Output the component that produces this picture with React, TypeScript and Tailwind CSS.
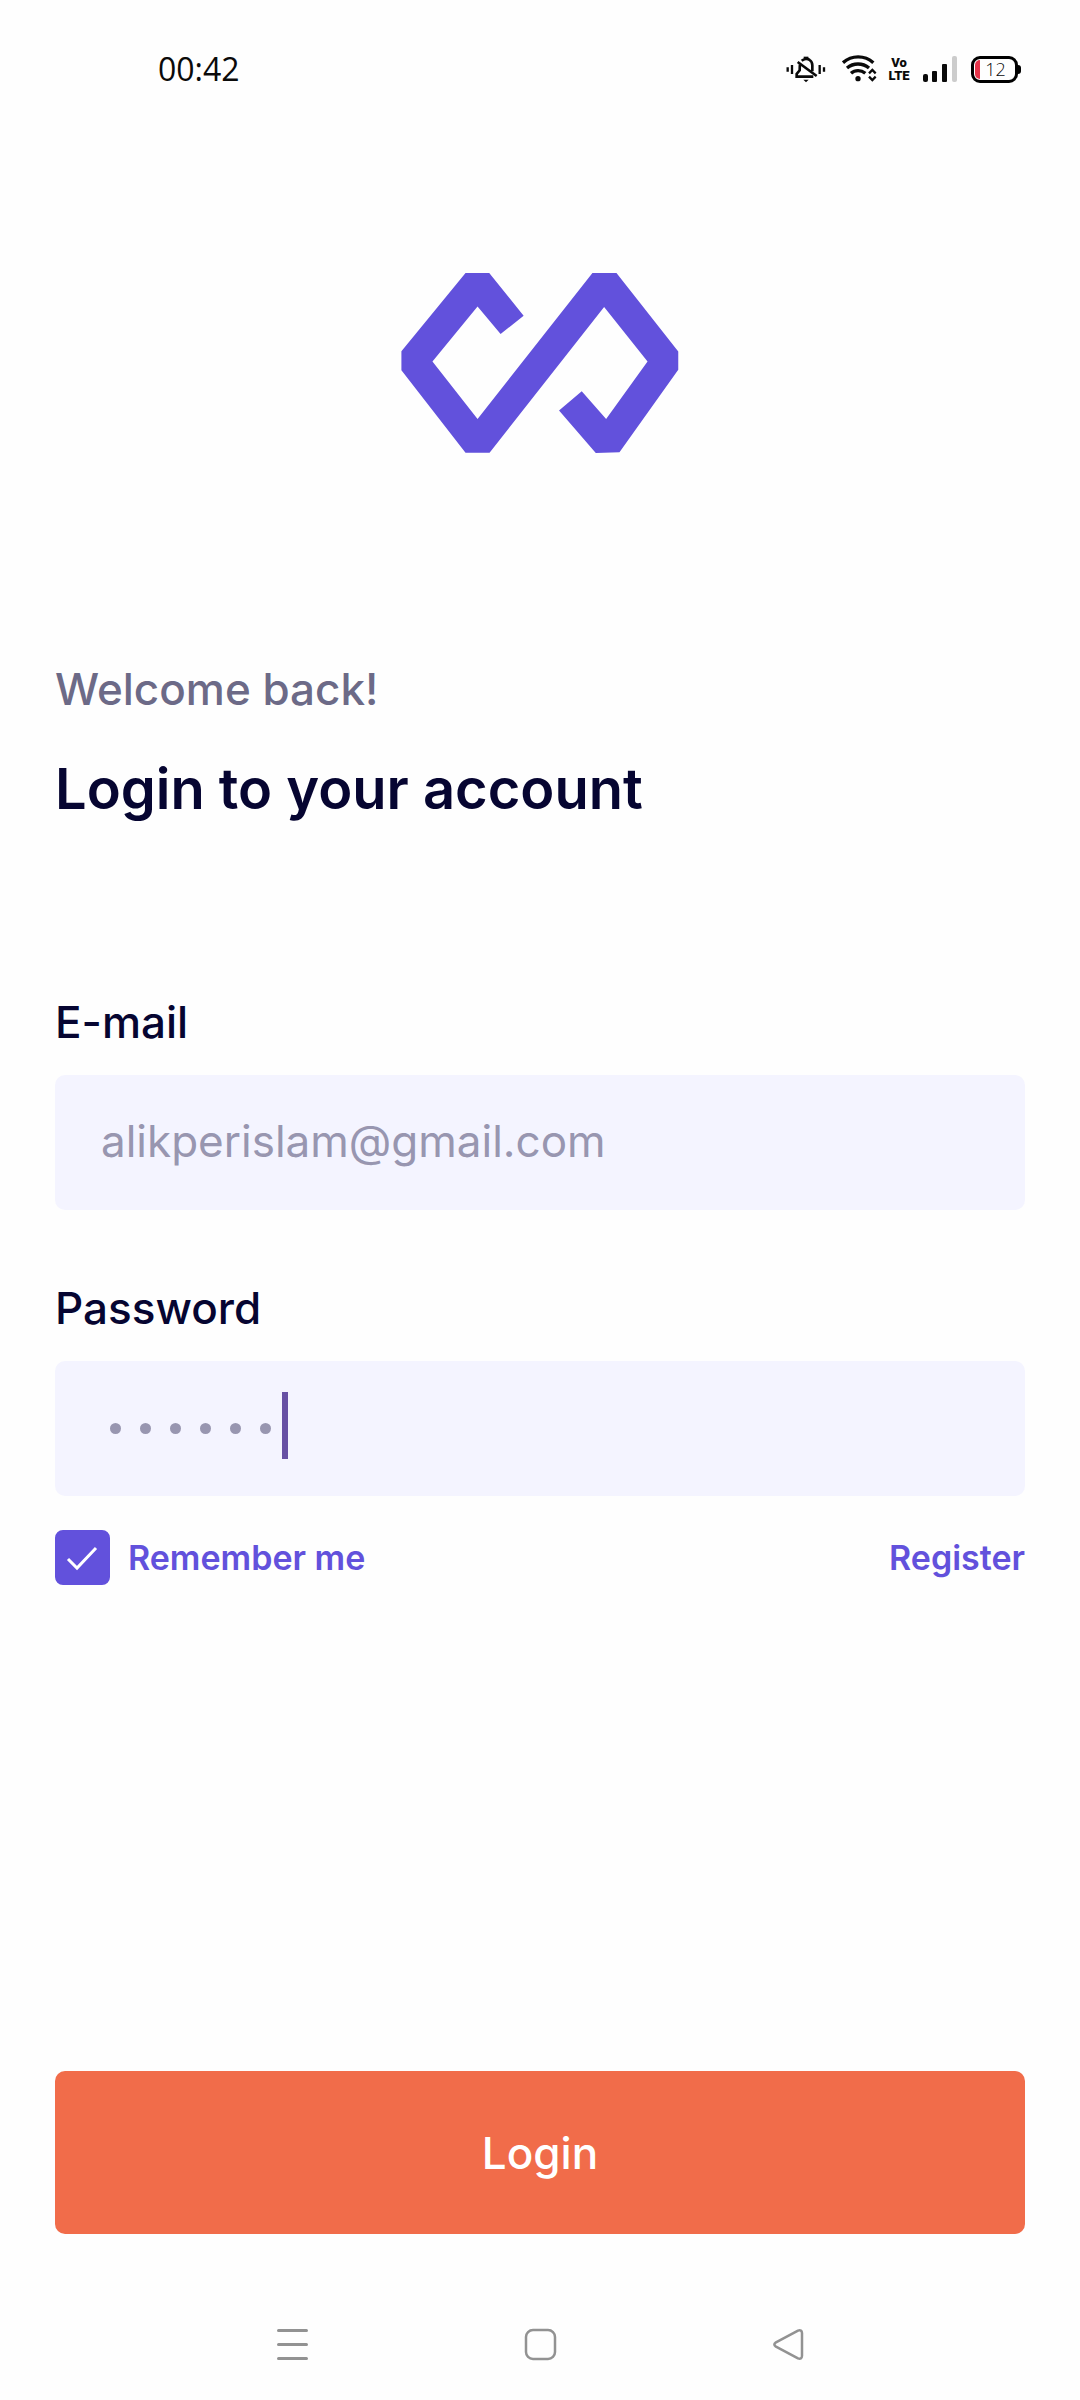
import { useState } from "react";

function BellOffIcon() {
  return (
    <svg width="40" height="28" viewBox="48 45 120 84" fill="none" stroke="#0a0a0a" strokeWidth="8" aria-hidden="true">
      <path d="M53 82V95M66 75V102M149 75V102M162 82V95" strokeWidth="7" />
      <path d="M95 62C102 56 113 55 119 60C125 64 127 70 127 76V94" />
      <path d="M90 74C89 78 89 82 89 91L80 102V110H130" />
      <path d="M83 66L140 108" />
      <path d="M101 53H115" strokeWidth="6" />
      <path d="M100 119H116L108 127Z" fill="#0a0a0a" stroke="none" />
    </svg>
  );
}

function WifiIcon() {
  return (
    <svg width="35" height="28" viewBox="216 45 105 84" fill="none" stroke="#0a0a0a" strokeWidth="10" aria-hidden="true">
      <path d="M219 68C245 45 284 45 310 68" />
      <path d="M231 84C250 68 278 68 297 84" />
      <path d="M243 100C255 89 273 89 286 100" />
      <circle cx="264" cy="116" r="8" fill="#0a0a0a" stroke="none" />
      <path d="M297 100L307 90L317 100M297 110L307 120L317 110" strokeWidth="7" />
    </svg>
  );
}

function SignalIcon() {
  return (
    <svg width="34" height="28" viewBox="0 0 34 28" aria-hidden="true">
      <rect x="0" y="19" width="5" height="8" rx="2" fill="#0a0a0a" />
      <rect x="9" y="16" width="5" height="11" rx="1" fill="#0a0a0a" />
      <rect x="19" y="9" width="5" height="18" rx="1" fill="#0a0a0a" />
      <rect x="29" y="1" width="5" height="26" rx="2" fill="#cccccc" />
    </svg>
  );
}

function Battery() {
  return (
    <div className="flex items-center" aria-label="Battery 12 percent">
      <div className="flex h-[27px] w-[47px] items-center rounded-[9px] border-[3px] border-black pr-1 pl-px">
        <span className="h-[19px] w-[5px] rounded-l-full rounded-r-xs bg-[#e5344a]" />
        <span className="flex-1 text-center text-[18px] leading-none font-light">12</span>
      </div>
      <span className="h-[9px] w-[3px] rounded-r-sm bg-black" />
    </div>
  );
}

function StatusBar() {
  return (
    <header className="flex h-[138px] items-center justify-between pr-[59px] pl-[158px] font-['Open_Sans','Noto_Sans',sans-serif] text-[#0a0a0a]">
      <time className="text-[32px] leading-10">00:42</time>
      <div className="flex items-center">
        <BellOffIcon />
        <span className="ml-4"><WifiIcon /></span>
        <span className="ml-3 flex w-5 flex-col items-center font-[Roboto,sans-serif] text-[13px] leading-[13px] font-black">
          <span>Vo</span>
          <span>LTE</span>
        </span>
        <span className="ml-3.5"><SignalIcon /></span>
        <span className="ml-3.5"><Battery /></span>
      </div>
    </header>
  );
}

function Logo() {
  return (
    <svg className="mx-auto" width="278" height="180" viewBox="64 69 830 539" role="img" aria-label="Logo">
      <polygon
        fill="#6251dc"
        points="256,69 327,69 430,197 361,252 292,169 157,334 292,506 636,69 708,69 893,304 893,359 717,606 646,608 536,481 604,423 677,506 801,334 671,171 328,607 256,607 64,360 64,303"
      />
    </svg>
  );
}

function PasswordField({ value, onChange }: { value: string; onChange: (value: string) => void }) {
  return (
    <div className="relative mt-[23px]">
      <input
        id="password"
        type="password"
        value={value}
        onChange={(e) => onChange(e.target.value)}
        className="h-[135px] w-full rounded-[10px] bg-[#f4f4ff] px-[46px] text-[44px] text-transparent caret-transparent outline-none"
      />
      <div aria-hidden="true" className="pointer-events-none absolute inset-y-0 left-[55px] flex items-center gap-[19px]">
        {Array.from(value, (_, i) => (
          <span key={i} className="size-[11px] rounded-full bg-[#9896b0]" />
        ))}
        <span className="mb-1.5 -ml-2 h-[67px] w-1.5 bg-[#6750a4]" />
      </div>
    </div>
  );
}

function NavBar() {
  return (
    <nav className="flex h-[111px] items-center justify-center gap-[215px] text-[#929292]">
      <button type="button" aria-label="Recent apps">
        <svg width="33" height="33" viewBox="0 0 33 33" fill="none" stroke="currentColor" strokeWidth="3" strokeLinecap="round">
          <path d="M2.5 2.5H30.5M2.5 16.5H30.5M2.5 30.5H30.5" />
        </svg>
      </button>
      <button type="button" aria-label="Home">
        <svg width="33" height="33" viewBox="0 0 33 33" fill="none" stroke="currentColor" strokeWidth="2.5">
          <rect x="2" y="2" width="29" height="29" rx="7" />
        </svg>
      </button>
      <button type="button" aria-label="Back">
        <svg width="33" height="33" viewBox="0 0 33 33" fill="none" stroke="currentColor" strokeWidth="2.5" strokeLinejoin="round">
          <path d="M26 2.6L3.5 14.7Q1.2 16.5 3.5 18.3L26 30.4Q29.8 31.5 30 28V5Q29.8 1.5 26 2.6Z" />
        </svg>
      </button>
    </nav>
  );
}

export default function App() {
  const [email, setEmail] = useState("alikperislam@gmail.com");
  const [password, setPassword] = useState("secret");
  const [remember, setRemember] = useState(true);

  return (
    <div className="flex min-h-screen flex-col bg-[#fefefe] font-[Inter,sans-serif] text-[#060531]">
      <StatusBar />
      <main className="flex flex-1 flex-col px-[55px] pt-[135px] pb-[55px]">
        <Logo />
        <p className="mt-[206px] text-[44px] leading-[60px] font-medium text-[#6c6a87]">Welcome back!</p>
        <h1 className="mt-[30px] text-[56px] leading-[80px] font-semibold">Login to your account</h1>

        <form className="mt-[163px] flex flex-1 flex-col" onSubmit={(e) => e.preventDefault()}>
          <label htmlFor="email" className="text-[44px] leading-[60px] font-medium">E-mail</label>
          <input
            id="email"
            type="email"
            value={email}
            onChange={(e) => setEmail(e.target.value)}
            className="mt-[23px] h-[135px] w-full rounded-[10px] bg-[#f4f4ff] px-[46px] pb-1 text-[44px] font-normal text-[#9896b0] outline-none"
          />

          <label htmlFor="password" className="mt-[68px] text-[44px] leading-[60px] font-medium">Password</label>
          <PasswordField value={password} onChange={setPassword} />

          <div className="mt-[34px] flex items-center justify-between text-[34px] leading-[55px] font-semibold text-[#6251dc]">
            <label className="flex items-center gap-[18px]">
              <span className="relative flex size-[55px]">
                <input
                  type="checkbox"
                  checked={remember}
                  onChange={(e) => setRemember(e.target.checked)}
                  className="size-full appearance-none rounded-lg border-2 border-[#6251dc] checked:bg-[#6251dc]"
                />
                {remember && (
                  <svg className="pointer-events-none absolute inset-0" width="55" height="55" viewBox="0 0 55 55" fill="none" stroke="#ffffff" strokeWidth="3" aria-hidden="true">
                    <path d="M13 29L22 38L41 18" />
                  </svg>
                )}
              </span>
              Remember me
            </label>
            <a href="#register">Register</a>
          </div>

          <button type="submit" className="mt-auto h-[163px] w-full rounded-[10px] bg-[#f16c4a] text-[44px] leading-[60px] font-medium text-white">
            Login
          </button>
        </form>
      </main>
      <NavBar />
    </div>
  );
}
